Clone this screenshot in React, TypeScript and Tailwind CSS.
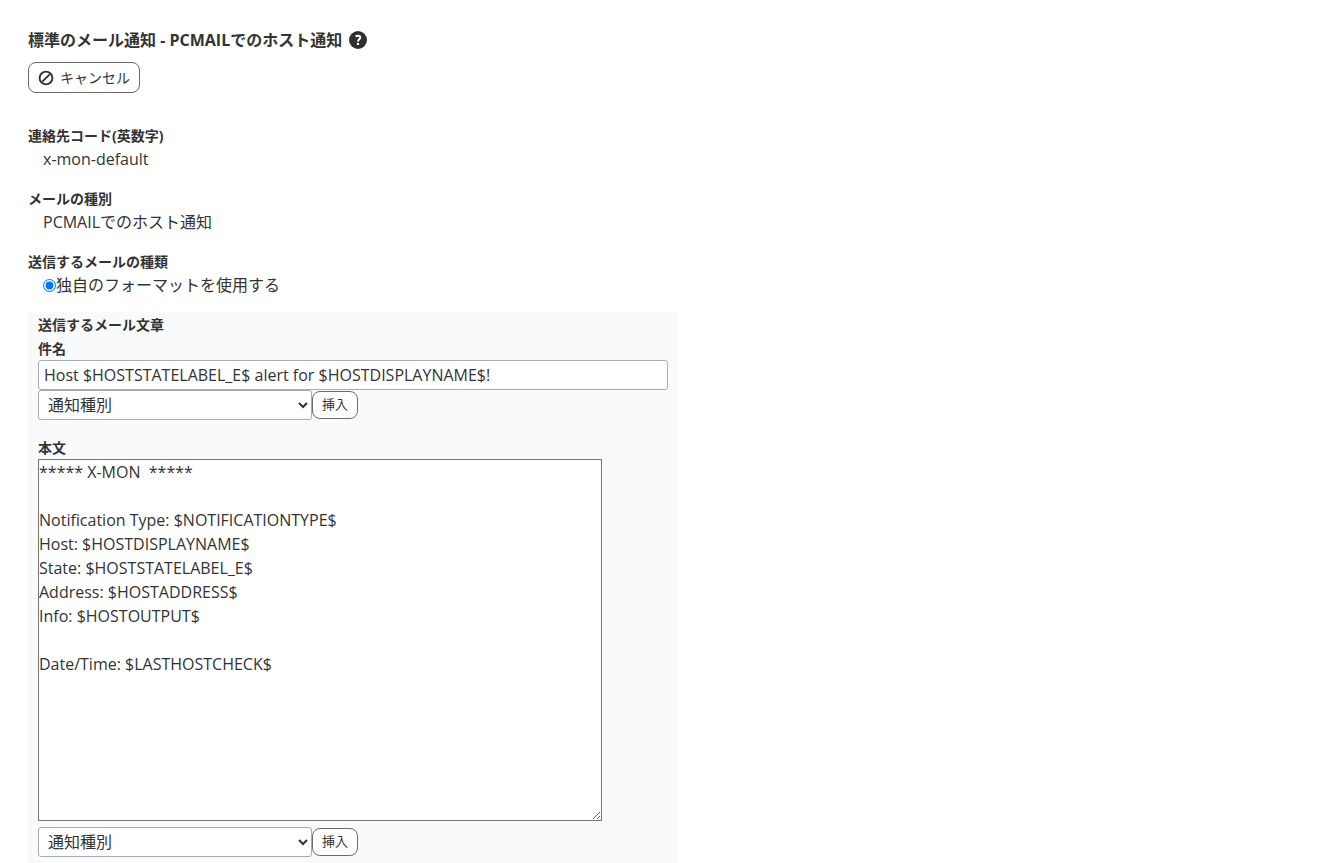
import { useState, type ReactNode } from "react";

const MACROS = ["通知種別", "ホスト名", "ホスト状態", "ホストアドレス", "ステータス情報"];

const DEFAULT_SUBJECT = "Host $HOSTSTATELABEL_E$ alert for $HOSTDISPLAYNAME$!";

const DEFAULT_BODY = `***** X-MON  *****

Notification Type: $NOTIFICATIONTYPE$
Host: $HOSTDISPLAYNAME$
State: $HOSTSTATELABEL_E$
Address: $HOSTADDRESS$
Info: $HOSTOUTPUT$

Date/Time: $LASTHOSTCHECK$
`;

const HelpIcon = () => (
  <svg viewBox="0 0 18 18" className="size-[18px]" fill="none" aria-hidden="true">
    <circle cx="9" cy="9" r="9" fill="#2f2f2f" />
    <path d="M6.6 5.6C7.3 5 8.1 4.7 9 4.7c1.4 0 2.3.7 2.3 1.8 0 1.7-2.3 1.7-2.3 3.9" stroke="#fff" strokeWidth="2" />
    <circle cx="9" cy="12.9" r="1.2" fill="#fff" />
  </svg>
);

const CancelIcon = () => (
  <svg viewBox="0 0 16 16" className="size-4" fill="none" stroke="currentColor" strokeWidth="1.9" aria-hidden="true">
    <circle cx="8" cy="8" r="6.4" />
    <path d="M4.4 11.6 11.6 4.4" />
  </svg>
);

interface FieldProps {
  label: string;
  children: ReactNode;
}

const Field = ({ label, children }: FieldProps) => (
  <div>
    <dt className="text-sm leading-[22px] font-bold">{label}</dt>
    <dd className="pl-[15px] leading-6">{children}</dd>
  </div>
);

const MacroPicker = ({ label }: { label: string }) => (
  <div className="flex items-center">
    <select
      aria-label={label}
      className="h-[30px] w-[274px] rounded-[3px] border border-[#a7abb3] bg-white px-[5px] text-base"
    >
      {MACROS.map((macro) => (
        <option key={macro}>{macro}</option>
      ))}
    </select>
    <button type="button" className="h-7 rounded-lg border border-[#6b6b6b] bg-white px-[9px] text-[13px]">
      挿入
    </button>
  </div>
);

const App = () => {
  const [subject, setSubject] = useState(DEFAULT_SUBJECT);
  const [body, setBody] = useState(DEFAULT_BODY);

  return (
    <main className="px-7 pt-7 font-['Open_Sans','Noto_Sans_CJK_JP',sans-serif] text-base text-[#333]">
      <h1 className="flex items-center gap-[7px] leading-6 font-bold">
        標準のメール通知 - PCMAILでのホスト通知
        <HelpIcon />
      </h1>
      <button
        type="button"
        className="mt-[10px] flex h-[31px] items-center gap-[6px] rounded-lg border border-[#6b6b6b] bg-white px-[9px] text-sm"
      >
        <CancelIcon />
        キャンセル
      </button>

      <dl className="mt-8 space-y-[17px]">
        <Field label="連絡先コード(英数字)">x-mon-default</Field>
        <Field label="メールの種別">PCMAILでのホスト通知</Field>
        <Field label="送信するメールの種類">
          <label className="flex items-center">
            <input type="radio" name="format" defaultChecked className="size-[13px]" />
            独自のフォーマットを使用する
          </label>
        </Field>
      </dl>

      <section className="mt-[15px] max-w-[650px] bg-[#f9fafc] px-[10px] pt-[2px] pb-4">
        <h2 className="text-sm leading-[22px] font-bold">送信するメール文章</h2>
        <label htmlFor="subject" className="mt-[2px] block text-sm leading-[22px] font-bold">
          件名
        </label>
        <input
          id="subject"
          type="text"
          value={subject}
          onChange={(e) => setSubject(e.target.value)}
          className="block h-[30px] w-full rounded-[3px] border border-[#a7abb3] bg-white px-[5px]"
        />
        <MacroPicker label="件名に挿入する項目" />

        <label htmlFor="body" className="mt-[17px] block text-sm leading-[22px] font-bold">
          本文
        </label>
        <textarea
          id="body"
          rows={15}
          value={body}
          onChange={(e) => setBody(e.target.value)}
          className="mb-[6px] block w-[564px] max-w-full border border-[#767676] bg-white leading-6"
        />
        <MacroPicker label="本文に挿入する項目" />
      </section>
    </main>
  );
};

export default App;
